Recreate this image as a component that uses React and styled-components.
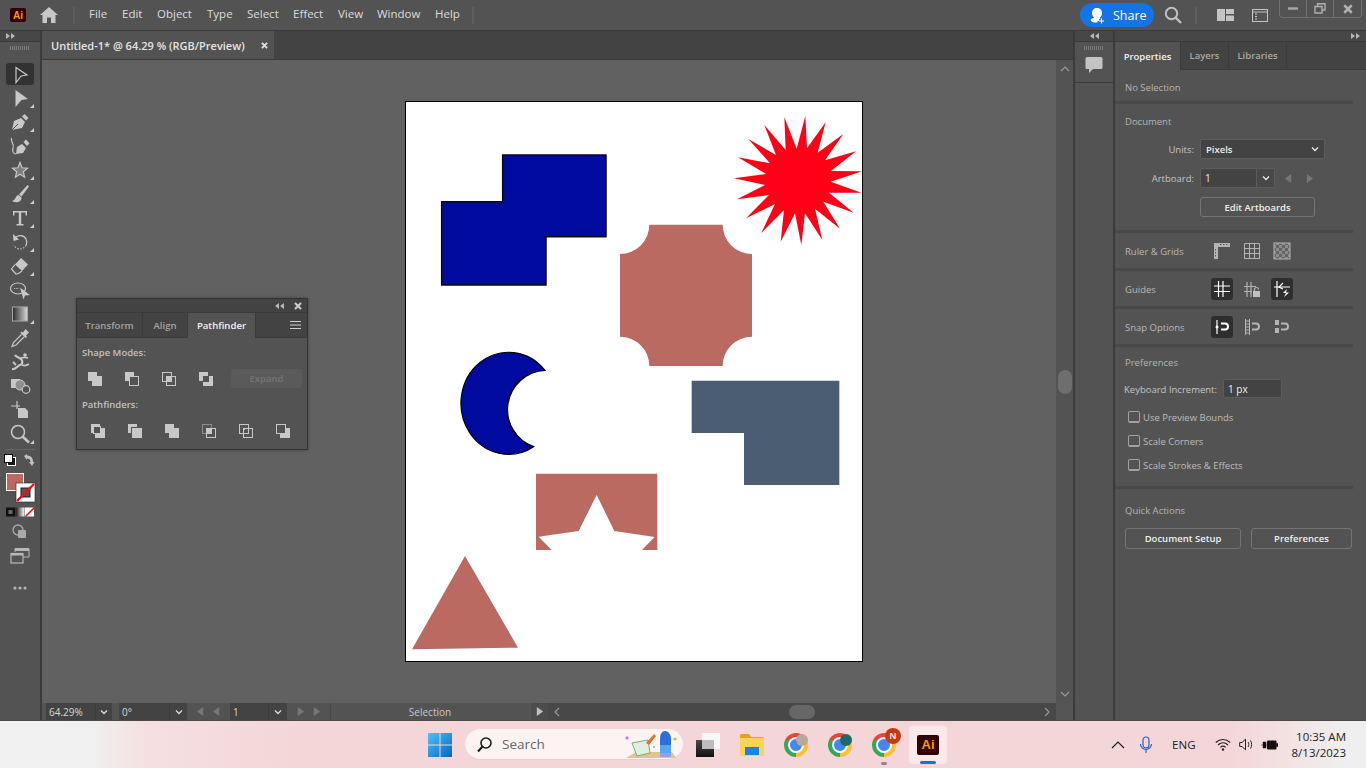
import styled, { createGlobalStyle } from 'styled-components';

const ICON = '#c8c8c8';
const PANEL = '#535353';
const LINE = '#3b3b3b';

const GlobalStyle = createGlobalStyle`
	html, body {
		margin: 0;
		padding: 0;
		background: #535353;
		font-family: "Open Sans", "Noto Sans", sans-serif;
	}
	* {
		box-sizing: border-box;
	}
	svg {
		display: block;
		flex: none;
	}
`;

const Shell = styled.div`
	width: 1366px;
	height: 768px;
	display: flex;
	flex-direction: column;
	overflow: hidden;
`;

/* top menu */
const MenuBar = styled.header`
	height: 31px;
	flex: none;
	display: flex;
	align-items: center;
	background: ${PANEL};
	border-bottom: 1px solid ${LINE};
	padding-left: 10px;
`;

const AiLogo = styled.div`
	width: ${(p) => p.$size}px;
	height: ${(p) => p.$size - 2}px;
	flex: none;
	display: flex;
	align-items: center;
	justify-content: center;
	background: #330000;
	color: #ff9a00;
	border-radius: 2px;
	font-family: "Liberation Sans", sans-serif;
	font-weight: 700;
	font-size: ${(p) => Math.round(p.$size * 0.6)}px;
`;

const MenuDivider = styled.div`
	width: 2px;
	height: 17px;
	background: #5e5e5e;
	margin: ${(p) => p.$margin};
	flex: none;
`;

const MenuItems = styled.nav`
	display: flex;
	gap: 15px;
	padding-bottom: 3px;
`;

const MenuItem = styled.span`
	font-size: 11.5px;
	color: #dcdcdc;
	width: ${(p) => p.$w}px;
	white-space: nowrap;
`;

const MenuRight = styled.div`
	margin-left: auto;
	display: flex;
	align-items: center;
	height: 100%;
	padding-right: 4px;
`;

const ShareButton = styled.div`
	width: 74px;
	height: 24px;
	border-radius: 12px;
	background: #1473e6;
	color: #fff;
	font-size: 12.5px;
	display: flex;
	align-items: center;
	gap: 8px;
	padding-left: 10px;
	margin-right: 10px;
`;

const WindowControls = styled.div`
	display: flex;
	align-self: flex-start;
	height: 18px;
	border: 1px solid #707070;
	border-top: none;
	border-radius: 0 0 4px 4px;
	margin-left: 11px;
`;

const WindowButton = styled.div`
	width: 27px;
	display: flex;
	align-items: center;
	justify-content: center;
	border-right: ${(p) => (p.$last ? 'none' : '1px solid #707070')};
`;

/* main area */
const Workspace = styled.div`
	flex: 1;
	display: flex;
	min-height: 0;
	background: ${LINE};
`;

const ToolColumn = styled.aside`
	width: 40px;
	flex: none;
	background: ${PANEL};
	display: flex;
	flex-direction: column;
	align-items: center;
	margin-right: 2px;
`;

const PanelStrip = styled.div`
	height: 11px;
	width: 100%;
	flex: none;
	background: #474747;
	display: flex;
	align-items: center;
	justify-content: ${(p) => p.$align || 'flex-start'};
	padding: 0 6px;
	border-bottom: 1px solid ${LINE};
`;

const Grip = styled.div`
	width: 20px;
	height: 4px;
	flex: none;
	margin: ${(p) => p.$margin};
	background: repeating-linear-gradient(90deg, #7c7c7c 0 1px, transparent 1px 2px);
`;

const ToolButton = styled.div`
	position: relative;
	width: 28px;
	height: ${(p) => (p.$active ? 22 : 24)}px;
	margin-bottom: ${(p) => (p.$active ? 1 : 0)}px;
	flex: none;
	display: flex;
	align-items: center;
	justify-content: center;
	border-radius: 3px;
	background: ${(p) => (p.$active ? '#323232' : 'transparent')};

	&::after {
		content: ${(p) => (p.$corner ? '""' : 'none')};
		position: absolute;
		right: 0;
		bottom: 2px;
		border-left: 4px solid transparent;
		border-bottom: 4px solid #d0d0d0;
	}
`;

const ToolDivider = styled.div`
	width: 30px;
	height: 1px;
	background: #666;
	margin: 3px 0 4px;
	flex: none;
`;

const ToolExtra = styled.div`
	margin-top: ${(p) => p.$top}px;
	flex: none;
`;

const DocColumn = styled.main`
	flex: 1;
	min-width: 0;
	display: flex;
	flex-direction: column;
`;

const TabBar = styled.div`
	height: 29px;
	flex: none;
	background: #434343;
	border-bottom: 1px solid ${LINE};
	display: flex;
`;

const DocTab = styled.div`
	width: 232px;
	background: ${PANEL};
	display: flex;
	align-items: center;
	justify-content: space-between;
	padding: 0 6px 0 9px;
	color: #e4e4e4;
	font-size: 11px;
	font-weight: 600;
	white-space: nowrap;
`;

const CanvasRow = styled.div`
	flex: 1;
	display: flex;
	min-height: 0;
`;

const Canvas = styled.div`
	flex: 1;
	position: relative;
	background: #616161;
	padding: 41px 0 0 363px;
	overflow: hidden;
`;

const Artboard = styled.svg`
	background: #fff;
`;

const VerticalScroll = styled.div`
	width: 17px;
	flex: none;
	background: ${PANEL};
	display: flex;
	flex-direction: column;
	align-items: center;
	padding: 6px 0;
`;

const ScrollThumb = styled.div`
	width: 14px;
	height: 24px;
	border-radius: 7px;
	background: #6e6e6e;
	margin: ${(p) => p.$margin};
	flex: none;
`;

const StatusBar = styled.footer`
	height: 17px;
	flex: none;
	display: flex;
	align-items: stretch;
	background: ${PANEL};
	padding-left: 4px;
	font-size: 10px;
	color: #d8d8d8;
`;

const StatusField = styled.div`
	width: ${(p) => p.$w}px;
	background: #434343;
	display: flex;
	align-items: center;
	padding: 1px 0 0 3px;
	flex: none;
	border-right: 1px solid ${LINE};
`;

const StatusChevron = styled.div`
	width: ${(p) => p.$w}px;
	background: #434343;
	display: flex;
	align-items: center;
	justify-content: center;
	flex: none;
	margin-right: ${(p) => p.$after || 0}px;
`;

const StatusNav = styled.div`
	width: 43px;
	display: flex;
	align-items: center;
	justify-content: center;
	gap: 7px;
	flex: none;
`;

const StatusMode = styled.div`
	width: 199px;
	flex: none;
	display: flex;
	align-items: center;
	justify-content: center;
	padding-top: 1px;
	border-left: 1px solid #484848;
	color: #c8c8c8;
`;

const StatusPlay = styled.div`
	width: 17px;
	margin-left: 2px;
	flex: none;
	background: #4c4c4c;
	display: flex;
	align-items: center;
	justify-content: center;
`;

const HorizontalScroll = styled.div`
	flex: 1;
	display: flex;
	align-items: center;
	background: #484848;
	padding: 0 6px;
`;

const HorizontalThumb = styled.div`
	width: 26px;
	height: 14px;
	border-radius: 7px;
	background: #666;
	margin-left: 229px;
`;

const ScrollCorner = styled.div`
	width: 17px;
	flex: none;
	background: #555;
`;

/* floating panel */
const FloatPanel = styled.section`
	position: absolute;
	left: 34px;
	top: 238px;
	width: 232px;
	height: 152px;
	background: ${PANEL};
	border: 1px solid #333;
	box-shadow: 0 0 3px rgba(0, 0, 0, 0.35);
	display: flex;
	flex-direction: column;
`;

const FloatHeader = styled.div`
	height: 13px;
	flex: none;
	background: #434343;
	display: flex;
	align-items: center;
	justify-content: flex-end;
	gap: 10px;
	padding-right: 5px;
`;

const FloatTabs = styled.div`
	height: 26px;
	flex: none;
	display: flex;
	background: #434343;
	border-top: 1px solid ${LINE};
	border-bottom: 1px solid ${LINE};
`;

const FloatTab = styled.div`
	width: ${(p) => p.$w}px;
	font-size: 9.6px;
	font-weight: 600;
	display: flex;
	align-items: center;
	justify-content: center;
	border-right: 1px solid ${LINE};
	margin-bottom: ${(p) => (p.$active ? -1 : 0)}px;
	background: ${(p) => (p.$active ? PANEL : 'transparent')};
	color: ${(p) => (p.$active ? '#f0f0f0' : '#a4a4a4')};
`;

const FloatMenu = styled.div`
	margin-left: auto;
	align-self: center;
	margin-right: 6px;
`;

const FloatTitle = styled.div`
	font-size: 9.5px;
	font-weight: 600;
	color: #c0c0c0;
	line-height: 14px;
	padding-left: 5px;
	margin-top: ${(p) => p.$top}px;
`;

const ModeRow = styled.div`
	display: flex;
	align-items: center;
	margin-top: ${(p) => p.$top}px;
	padding-left: ${(p) => p.$left}px;
	gap: ${(p) => p.$gap}px;
`;

const ExpandButton = styled.div`
	width: 71px;
	height: 19px;
	margin-left: -4px;
	background: #5a5a5a;
	border-radius: 2px;
	color: #747474;
	font-size: 9.5px;
	font-weight: 600;
	display: flex;
	align-items: center;
	justify-content: center;
`;

/* comments + properties */
const CommentColumn = styled.aside`
	width: 38px;
	flex: none;
	margin: 0 2px;
	background: ${PANEL};
	display: flex;
	flex-direction: column;
	align-items: center;
`;

const CommentCell = styled.div`
	width: 100%;
	height: 41px;
	flex: none;
	display: flex;
	flex-direction: column;
	align-items: center;
	border-bottom: 1px solid ${LINE};
`;

const PropertiesColumn = styled.aside`
	width: 251px;
	flex: none;
	background: ${PANEL};
	display: flex;
	flex-direction: column;
`;

const PropTabs = styled.div`
	height: 28px;
	flex: none;
	display: flex;
	background: #434343;
	border-bottom: 1px solid ${LINE};
`;

const PropTab = styled.div`
	width: ${(p) => p.$w}px;
	font-size: 9.5px;
	font-weight: 600;
	display: flex;
	align-items: center;
	justify-content: center;
	border-right: 1px solid ${LINE};
	margin-bottom: ${(p) => (p.$active ? -1 : 0)}px;
	background: ${(p) => (p.$active ? PANEL : 'transparent')};
	color: ${(p) => (p.$active ? '#f0f0f0' : '#a8a8a8')};
`;

const Section = styled.div`
	width: 238px;
	height: ${(p) => p.$h}px;
	flex: none;
	border-bottom: ${(p) => (p.$last ? 'none' : '3px solid #484848')};
	padding: ${(p) => p.$pad || '0 0 0 10px'};
`;

const SectionTitle = styled.div`
	font-size: 9.5px;
	font-weight: 500;
	line-height: 16px;
	color: #b4b4b4;
`;

const FieldGrid = styled.div`
	display: grid;
	grid-template-columns: 69px auto;
	column-gap: 6px;
	row-gap: 9px;
	align-items: center;
	justify-content: start;
	margin-top: 9px;
`;

const FieldLabel = styled.div`
	font-size: 9.5px;
	color: #c4c4c4;
	text-align: right;
	white-space: nowrap;
	padding-top: ${(p) => p.$nudge || 0}px;
`;

const SelectBox = styled.div`
	width: ${(p) => p.$w}px;
	height: 20px;
	background: #434343;
	border: 1px solid #5c5c5c;
	border-radius: 2px;
	display: flex;
	align-items: center;
	justify-content: space-between;
	padding: 0 5px;
	font-size: 9.5px;
	font-weight: 600;
	color: #ececec;
`;

const ArtboardRow = styled.div`
	display: flex;
	align-items: center;
`;

const InputBox = styled.div`
	width: ${(p) => p.$w}px;
	height: ${(p) => p.$h || 20}px;
	background: #434343;
	border: 1px solid #5c5c5c;
	border-radius: ${(p) => p.$radius || '2px'};
	display: flex;
	align-items: center;
	padding: 0 4px;
	font-size: 10px;
	color: #ececec;
	flex: none;
`;

const ChevronBox = styled.div`
	width: 18px;
	height: 20px;
	border: 1px solid #5c5c5c;
	border-left: none;
	border-radius: 0 2px 2px 0;
	background: #484848;
	display: flex;
	align-items: center;
	justify-content: center;
	margin-right: 9px;
	flex: none;
`;

const ArrowPair = styled.div`
	display: flex;
	gap: 12px;
	align-items: center;
`;

const OutlineButton = styled.div`
	width: ${(p) => p.$w}px;
	height: ${(p) => p.$h || 20}px;
	margin: ${(p) => p.$margin || 0};
	border: 1.5px solid #757575;
	border-radius: 3px;
	display: flex;
	align-items: center;
	justify-content: center;
	font-size: 9.5px;
	font-weight: 600;
	color: #efefef;
	flex: none;
	white-space: nowrap;
`;

const IconRow = styled.div`
	height: 100%;
	display: flex;
	align-items: center;
`;

const IconLabel = styled.div`
	width: 86px;
	flex: none;
	font-size: 9.5px;
	font-weight: 500;
	color: #b8b8b8;
	white-space: nowrap;
	padding-top: 2px;
`;

const IconGroup = styled.div`
	display: flex;
	gap: 8px;
`;

const IconTile = styled.div`
	width: 22px;
	height: 22px;
	border-radius: 3px;
	display: flex;
	align-items: center;
	justify-content: center;
	background: ${(p) => (p.$on ? '#2e2e2e' : 'transparent')};
`;

const IncrementRow = styled.div`
	display: flex;
	align-items: center;
	gap: 6px;
	margin: 8px 0 0 -1px;
`;

const CheckRow = styled.div`
	display: flex;
	align-items: center;
	gap: 3px;
	height: 24px;
	margin-left: 3px;
	font-size: 9.5px;
	color: #bcbcbc;
	white-space: nowrap;
`;

const CheckBox = styled.div`
	width: 12px;
	height: 12px;
	border: 1px solid #a0a0a0;
	border-bottom-width: 2px;
	border-radius: 2px;
`;

const CheckList = styled.div`
	margin-top: 7px;
`;

const ButtonRow = styled.div`
	display: flex;
	gap: 10px;
	margin: 9px 0 0 0;
`;

/* windows taskbar */
const Taskbar = styled.footer`
	height: 48px;
	flex: none;
	display: flex;
	align-items: center;
	padding-left: 428px;
	border-top: 1px solid #4a4a4a;
	background: linear-gradient(90deg, #f1f1f1 0, #f0f0f0 90px, #f5dfe0 150px, #f4d6d8 300px, #f4d6d8 1230px, #f3e2e3 1290px, #efefef 1345px);
`;

const SearchPill = styled.div`
	width: 218px;
	height: 31px;
	margin: 0 13px;
	border-radius: 16px;
	background: #fdf3f2;
	border-bottom: 1px solid #e4d2d2;
	display: flex;
	align-items: center;
	padding-left: 11px;
	gap: 9px;
	font-size: 13.5px;
	color: #666;
	position: relative;
`;

const SearchArt = styled.svg`
	position: absolute;
	right: 5px;
	top: 2px;
`;

const TaskIcon = styled.div`
	position: relative;
	width: 24px;
	height: 24px;
	margin-right: ${(p) => p.$after}px;
	flex: none;
`;

const ChromeBall = styled.div`
	width: 24px;
	height: 24px;
	border-radius: 50%;
	background: conic-gradient(#e8453c -60deg, #e8453c 60deg, #fbc02d 60deg, #fbc02d 180deg, #34a853 180deg, #34a853 300deg, #e8453c 300deg);
	display: flex;
	align-items: center;
	justify-content: center;

	&::after {
		content: '';
		width: 12px;
		height: 12px;
		border-radius: 50%;
		background: #4285f4;
		border: 2px solid #fff;
	}
`;

const ChromeBadge = styled.div`
	position: absolute;
	width: ${(p) => p.$size}px;
	height: ${(p) => p.$size}px;
	right: ${(p) => p.$right}px;
	top: ${(p) => p.$top}px;
	border-radius: 50%;
	background: ${(p) => p.$bg};
	color: #f4e4dc;
	font-size: 9px;
	font-weight: 700;
	display: flex;
	align-items: center;
	justify-content: center;
`;

const RunDot = styled.div`
	position: absolute;
	left: 9px;
	top: 29px;
	width: 6px;
	height: 3px;
	border-radius: 2px;
	background: #8a8a8a;
`;

const AiTask = styled.div`
	position: relative;
	width: 38px;
	height: 38px;
	border-radius: 4px;
	background: #f9e9ea;
	display: flex;
	align-items: center;
	justify-content: center;
	flex: none;

	&::after {
		content: '';
		position: absolute;
		left: 11px;
		bottom: 0;
		width: 16px;
		height: 3px;
		border-radius: 2px;
		background: #0b78d4;
	}
`;

const Tray = styled.div`
	margin-left: auto;
	display: flex;
	align-items: center;
	color: #222;
	padding-right: 20px;
`;

const TrayLang = styled.span`
	font-size: 11.5px;
	margin: 0 19px 0 19px;
`;

const Clock = styled.div`
	margin-left: 14px;
	text-align: right;
	font-size: 11.5px;
	line-height: 16px;
	white-space: nowrap;
`;

/* icons */
const Chevron = ({ color = '#dcdcdc', size = 8 }) => (
	<svg width={size} height={size} viewBox="0 0 8 8">
		<path d="M1 2.5 4 5.5 7 2.5" fill="none" stroke={color} strokeWidth="1.3" />
	</svg>
);

const DoubleArrow = ({ left }) => (
	<svg width="9" height="6" viewBox="0 0 9 6" style={left ? { transform: 'scaleX(-1)' } : undefined}>
		<path d="M0 0 4 3 0 6ZM5 0 9 3 5 6Z" fill="#b8b8b8" />
	</svg>
);

const Arrow = ({ dir = 'right', color = '#777', size = 10 }) => (
	<svg width={size} height={size} viewBox="0 0 10 10">
		<path d={dir === 'right' ? 'M2 0 9 5 2 10Z' : 'M8 0 1 5 8 10Z'} fill={color} />
	</svg>
);

const Cross = ({ size = 8, color = '#dcdcdc', width = 2 }) => (
	<svg width={size} height={size} viewBox="0 0 8 8">
		<path d="M1 1 7 7M7 1 1 7" stroke={color} strokeWidth={width} />
	</svg>
);

const Tool24 = ({ children }) => (
	<svg width="24" height="24" viewBox="0 0 24 24" fill={ICON} stroke="none">
		{children}
	</svg>
);

const o = { fill: 'none', stroke: ICON, strokeWidth: 1.2 };

const TOOLS = [
	{ id: 'select', active: true, d: <path d="M8 5.5 19 13 13.2 14 8 20.5Z" {...o} /> },
	{ id: 'direct', corner: true, d: <path d="M7.5 4 20 13 13.5 14 7.5 21Z" /> },
	{
		id: 'pen',
		corner: true,
		d: (
			<>
				<path d="M4 20 6 11 13 8 17 12 14 18Z" />
				<path d="M14 6.5 16.5 4 20.5 8 18 10.5Z" />
				<path d="M4 20 10 14" stroke={PANEL} strokeWidth="1" />
			</>
		),
	},
	{
		id: 'curvature',
		d: (
			<>
				<path d="M8 20 9 13 14 10 18 14 15 19Z" />
				<path d="M15.5 8 18 5.5 21.5 9.5 19 12Z" />
				<path d="M3.5 4C2 9 7 9 5 14 4 18 6 20 8 20" {...o} />
			</>
		),
	},
	{ id: 'star', corner: true, d: <path d="M12 4.5 14 9.8 19.5 10.2 15.3 13.8 16.6 19.2 12 16.2 7.4 19.2 8.7 13.8 4.5 10.2 10 9.8Z" fill="#7c7c7c" stroke={ICON} strokeWidth="1.2" /> },
	{
		id: 'brush',
		corner: true,
		d: (
			<>
				<path d="M19.5 3 21 4.5 13.5 14.5 11 12.5Z" />
				<path d="M10.5 13C7.5 13 8 18 4 19 8 21.5 14 20 13.5 15.5Z" />
			</>
		),
	},
	{
		id: 'type',
		corner: true,
		d: (
			<path d="M5 5H19V9.5H17.6V6.6H13.2V18H15.5V19.6H8.5V18H10.8V6.6H6.4V9.5H5Z" />
		),
	},
	{
		id: 'rotate',
		corner: true,
		d: (
			<>
				<path d="M7 8C10 4.5 16 5 18 9 19 11 19 13 18.3 15" {...o} />
				<path d="M18.3 15C15 20.5 8.5 20 5.8 15" {...o} strokeDasharray="1.4 1.6" />
				<path d="M5 4 5.5 11 11 9.5Z" />
			</>
		),
	},
	{
		id: 'eraser',
		corner: true,
		d: (
			<>
				<path d="M13 4 20 10.5 14 17 7 10.5Z" />
				<path d="M7 10.5 3.5 15 8 20 10.5 19.5 14 17" {...o} />
			</>
		),
	},
	{
		id: 'lasso',
		d: (
			<>
				<ellipse cx="10" cy="10.5" rx="7.5" ry="5.5" {...o} />
				<path d="M6 10.5H11" {...o} strokeDasharray="1.2 1.2" />
				<path d="M12 9.5 22 17 17 17.5 15.5 21.5Z" />
			</>
		),
	},
	{
		id: 'gradient',
		corner: true,
		d: (
			<>
				<defs>
					<linearGradient id="toolGrad">
						<stop offset="0" stopColor="#2a2a2a" />
						<stop offset="1" stopColor="#d8d8d8" />
					</linearGradient>
				</defs>
				<rect x="4.5" y="5" width="15" height="14" fill="url(#toolGrad)" stroke="#a8a8a8" />
			</>
		),
	},
	{
		id: 'dropper',
		d: (
			<>
				<path d="M17.5 3 21 6.5 18 9.5 19 11 17.5 12 12.5 7 13.5 5.5 15 6.5Z" />
				<path d="M13.5 8.5 5.5 16.5 4 20.5 8 19 16 11" {...o} />
			</>
		),
	},
	{
		id: 'puppet',
		d: (
			<>
				<path d="M4 19C8 20 9 16 12 15 15 14 15 11 13 9 11 7.5 8 7 7 5" fill="none" stroke={ICON} strokeWidth="2.2" />
				<path d="M12 9C15 7 17 7 20 8M14 15C16 16 18 16 21 14M8 15 5 12" fill="none" stroke={ICON} strokeWidth="1.8" />
				<circle cx="17" cy="5" r="1.8" />
			</>
		),
	},
	{
		id: 'builder',
		d: (
			<>
				<rect x="3" y="5" width="9" height="9" />
				<circle cx="12" cy="11" r="5" fill="#909090" stroke={ICON} strokeWidth="1" />
				<circle cx="18" cy="15.5" r="3.8" fill={PANEL} stroke={ICON} strokeWidth="1.2" />
			</>
		),
	},
	{
		id: 'artboard',
		d: (
			<>
				<path d="M9 3V11M3 8H12" {...o} />
				<path d="M10 10H17L20 13V20H10Z" />
			</>
		),
	},
	{
		id: 'zoom',
		corner: true,
		d: (
			<>
				<circle cx="10" cy="10" r="6.5" {...o} strokeWidth="1.5" />
				<path d="M14.8 14.8 21 20.5" fill="none" stroke={ICON} strokeWidth="2.6" />
			</>
		),
	},
];

const FillStroke = () => (
	<svg width="40" height="46" viewBox="0 0 40 46">
		<rect x="6.5" y="0.5" width="17" height="17" fill="#bb6a61" stroke="#fff" />
		<rect x="16" y="10" width="19" height="19" fill="#fff" stroke="#222" strokeWidth="0.6" />
		<rect x="21" y="15" width="9" height="9" fill="#555" stroke="#222" />
		<path d="M17 28 34 11" stroke="#f01010" strokeWidth="2.4" />
		<rect x="6" y="34.5" width="9" height="9" fill="#111" />
		<rect x="8.5" y="37" width="4" height="4" fill="#666" />
		<defs>
			<linearGradient id="miniGrad">
				<stop offset="0" stopColor="#111" />
				<stop offset="1" stopColor="#fff" />
			</linearGradient>
		</defs>
		<rect x="15.5" y="34.5" width="9" height="9" fill="url(#miniGrad)" />
		<rect x="25" y="34.5" width="9" height="9" fill="#fff" />
		<path d="M25.5 43.5 34 35" stroke="#f01010" strokeWidth="1.6" />
	</svg>
);

const PF = ({ children }) => (
	<svg width="16" height="16" viewBox="0 0 16 16" fill={ICON} stroke="none">
		{children}
	</svg>
);

const line = { fill: 'none', stroke: ICON, strokeWidth: 1 };

const SHAPE_MODES = [
	<path key="1" d="M1 1H10V5H15V15H5V10H1Z" />,
	<>
		<path d="M1 1H10V5H5V10H1Z" />
		<rect x="5.5" y="5.5" width="9" height="9" {...line} />
	</>,
	<>
		<rect x="1.5" y="1.5" width="9" height="9" {...line} />
		<rect x="5.5" y="5.5" width="9" height="9" {...line} />
		<rect x="5" y="5" width="6" height="6" />
	</>,
	<>
		<path d="M1 1H10V5H5V10H1Z" />
		<path d="M11 5H15V15H5V11H11Z" />
	</>,
];

const PATHFINDERS = [
	<>
		<path d="M1 1H10V3H3V10H1Z" />
		<rect x="3.5" y="3.5" width="7" height="7" {...line} />
		<path d="M5 11H11V5H15V15H5Z" />
	</>,
	<>
		<path d="M1 1H10V4H4V10H1Z" />
		<rect x="5" y="5" width="10" height="10" />
	</>,
	<path d="M1 1H10V5H15V15H5V10H1Z" />,
	<>
		<rect x="1.5" y="1.5" width="9" height="9" fill="none" stroke="#8e8e8e" />
		<rect x="5.5" y="5.5" width="9" height="9" {...line} />
		<rect x="5" y="5" width="6" height="6" />
	</>,
	<>
		<rect x="1.5" y="1.5" width="9" height="9" {...line} />
		<rect x="5.5" y="5.5" width="9" height="9" {...line} />
		<path d="M5 8 8 5" {...line} />
	</>,
	<>
		<rect x="1.5" y="1.5" width="9" height="9" {...line} />
		<path d="M11 5H15V15H5V11H11Z" />
	</>,
];

const Tile = ({ children }) => (
	<svg width="18" height="18" viewBox="0 0 18 18" fill={ICON} stroke="none">
		{children}
	</svg>
);

const white = { fill: 'none', stroke: '#fff', strokeWidth: 1.2 };
const gray = { fill: 'none', stroke: '#b4b4b4', strokeWidth: 1.2 };

const StarBurst =
	'1201,48 1206,145 1262,67 1238,158 1315,102 1260,181 1353,154 1278,213 1371,214 1277,245 1369,278 1272,278 1346,338 1255,305 1305,386 1230,326 1252,420 1200,340 1189,435 1170,340 1127,425 1137,330 1069,399 1110,312 1023,355 1092,285 996,298 1080,255 987,235 1083,222 999,172 1095,190 1030,117 1113,165 1078,75 1142,150 1138,52 1175,146';

const ArtboardShapes = () => (
	<Artboard width="458" height="561" viewBox="405 101 458 561">
		<rect x="405.5" y="101.5" width="457" height="560" fill="#fff" stroke="#000" />
		<g transform="translate(405 100) scale(0.33333)">
			<path d="M293 165H603V410H423V555H110V305H293Z" fill="#000a9f" stroke="#0a0a14" strokeWidth="4.5" />
			<path d="M733 374H953A88 88 0 0 0 1041 462V710A88 88 0 0 0 953 798H733A88 88 0 0 0 645 710V462A88 88 0 0 0 733 374Z" fill="#bb6a61" />
			<polygon points={StarBurst} fill="#ff0016" />
		</g>
		<g transform="translate(405 345) scale(0.33333)">
			<path d="M420 76A143 153 0 1 0 386 305A118 118 0 0 1 420 76Z" fill="#000a9f" stroke="#000" strokeWidth="3.5" />
			<path d="M860 107H1303V420H1017V264H860Z" fill="#4a5d72" />
			<path d="M393 386H757V615H711L749 576 628 558 575 450 521 558 401 575 440 615H393Z" fill="#bb6a61" />
			<path d="M180 633 339 908 21 913Z" fill="#bb6a61" />
		</g>
	</Artboard>
);

const App = () => (
	<Shell>
		<GlobalStyle />
		<MenuBar>
			<AiLogo $size={16}>Ai</AiLogo>
			<svg width="20" height="18" viewBox="0 0 20 18" style={{ marginLeft: 13 }}>
				<path d="M10 1 19 9H16.5V17H12V11.5H8V17H3.5V9H1Z" fill="#c8c8c8" />
			</svg>
			<MenuDivider $margin="0 14px 0 14px" />
			<MenuItems>
				{[['File', 18], ['Edit', 20], ['Object', 35], ['Type', 25], ['Select', 31], ['Effect', 30], ['View', 24], ['Window', 43], ['Help', 25]].map(([label, w]) => (
					<MenuItem key={label} $w={w}>{label}</MenuItem>
				))}
			</MenuItems>
			<MenuDivider $margin="0 0 0 12px" />
			<MenuRight>
				<ShareButton>
					<svg width="15" height="17" viewBox="0 0 15 17">
						<path d="M7 1C10 1 12 3 12 6 12 8 11 9.5 10 10.5V11.5L11 12H9V14H7.5V15.5H5C2 15.5 .5 14 .5 12.5 2 11.5 4 11 4 10.5 3 9.5 2 8 2 6 2 3 4 1 7 1Z" fill="#fff" />
						<path d="M11.5 11.5V16.5M9 14H14" stroke="#fff" strokeWidth="1.2" />
					</svg>
					Share
				</ShareButton>
				<svg width="18" height="18" viewBox="0 0 18 18">
					<circle cx="7.5" cy="7.5" r="5.7" fill="none" stroke="#c0c0c0" strokeWidth="2" />
					<path d="M11.5 11.5 17 17" stroke="#c0c0c0" strokeWidth="2.4" />
				</svg>
				<MenuDivider $margin="0 20px 0 13px" />
				<svg width="17" height="12" viewBox="0 0 17 12" style={{ marginRight: 18 }}>
					<path d="M0 0H8V12H0ZM9 0H17V5H9ZM9 6.5H17V12H9Z" fill="#c4c4c4" />
				</svg>
				<svg width="16" height="13" viewBox="0 0 16 13">
					<rect x=".5" y=".5" width="15" height="12" fill="none" stroke="#c4c4c4" />
					<path d="M0 3H16M3 5H5M3 7.5H5M3 10H5" stroke="#c4c4c4" />
				</svg>
				<WindowControls>
					<WindowButton>
						<svg width="10" height="3" viewBox="0 0 10 3"><rect width="10" height="2.4" y=".3" fill="#a8a8a8" /></svg>
					</WindowButton>
					<WindowButton>
						<svg width="12" height="11" viewBox="0 0 12 11">
							<path d="M3.5 3V.8H11V7H8M1 3.5H8V10H1Z" fill="none" stroke="#b0b0b0" strokeWidth="1.4" />
						</svg>
					</WindowButton>
					<WindowButton $last>
						<Cross size={10} color="#b0b0b0" />
					</WindowButton>
				</WindowControls>
			</MenuRight>
		</MenuBar>

		<Workspace>
			<ToolColumn>
				<PanelStrip><DoubleArrow /></PanelStrip>
				<Grip $margin="4px 0 13px" />
				{TOOLS.map((tool) => (
					<ToolButton key={tool.id} $active={tool.active} $corner={tool.corner}>
						<Tool24>{tool.d}</Tool24>
					</ToolButton>
				))}
				<ToolDivider />
				<svg width="32" height="14" viewBox="0 0 32 14">
					<rect x="3.5" y="3.5" width="8" height="8" fill="#111" stroke="#fff" />
					<rect x=".5" y=".5" width="8" height="8" fill="#fff" stroke="#111" />
					<path d="M20 2 23 0V1.5C27 1.5 29 4 29 8H30.5L28 12 25 8H26.5C26.5 5.5 25 4.5 23 4.5V6Z" fill="#c0c0c0" />
				</svg>
				<ToolExtra $top={5}><FillStroke /></ToolExtra>
				<ToolExtra $top={4}>
					<svg width="18" height="18" viewBox="0 0 18 18">
						<circle cx="7" cy="7" r="5" fill="none" stroke="#aaa" strokeWidth="1.3" />
						<rect x="7" y="7" width="8" height="8" rx="1" fill="#aaa" />
					</svg>
				</ToolExtra>
				<ToolExtra $top={7}>
					<svg width="20" height="16" viewBox="0 0 20 16">
						<path d="M5 4V.5H19V9H13" fill="none" stroke="#b8b8b8" strokeWidth="1" />
						<rect x="5" y="0" width="14" height="3" fill="#b8b8b8" />
						<rect x="1" y="5.5" width="12" height="9.5" fill="none" stroke="#b8b8b8" strokeWidth="1.2" />
						<rect x="1" y="5" width="12" height="2.5" fill="#b8b8b8" />
					</svg>
				</ToolExtra>
				<ToolExtra $top={22}>
					<svg width="14" height="4" viewBox="0 0 14 4" fill="#b4b4b4">
						<circle cx="2" cy="2" r="1.6" /><circle cx="7" cy="2" r="1.6" /><circle cx="12" cy="2" r="1.6" />
					</svg>
				</ToolExtra>
			</ToolColumn>

			<DocColumn>
				<TabBar>
					<DocTab>
						Untitled-1* @ 64.29 % (RGB/Preview)
						<Cross size={7} color="#e4e4e4" />
					</DocTab>
				</TabBar>
				<CanvasRow>
					<Canvas>
						<ArtboardShapes />
						<FloatPanel>
							<FloatHeader>
								<DoubleArrow left />
								<Cross size={8} color="#cfcfcf" />
							</FloatHeader>
							<FloatTabs>
								<FloatTab $w={66}>Transform</FloatTab>
								<FloatTab $w={45}>Align</FloatTab>
								<FloatTab $w={68} $active>Pathfinder</FloatTab>
								<FloatMenu>
									<svg width="11" height="8" viewBox="0 0 11 8">
										<path d="M0 .5H11M0 4H11M0 7.5H11" stroke="#cfcfcf" />
									</svg>
								</FloatMenu>
							</FloatTabs>
							<FloatTitle $top={8}>Shape Modes:</FloatTitle>
							<ModeRow $top={9} $left={10} $gap={21}>
								{SHAPE_MODES.map((icon, i) => <PF key={i}>{icon}</PF>)}
								<ExpandButton>Expand</ExpandButton>
							</ModeRow>
							<FloatTitle $top={10}>Pathfinders:</FloatTitle>
							<ModeRow $top={11} $left={13} $gap={21}>
								{PATHFINDERS.map((icon, i) => <PF key={i}>{icon}</PF>)}
							</ModeRow>
						</FloatPanel>
					</Canvas>
					<VerticalScroll>
						<svg width="10" height="6" viewBox="0 0 10 6"><path d="M1 5 5 1 9 5" fill="none" stroke="#9a9a9a" strokeWidth="1.2" /></svg>
						<ScrollThumb $margin="298px 0 auto" />
						<svg width="10" height="6" viewBox="0 0 10 6"><path d="M1 1 5 5 9 1" fill="none" stroke="#9a9a9a" strokeWidth="1.2" /></svg>
					</VerticalScroll>
				</CanvasRow>
				<StatusBar>
					<StatusField $w={50}>64.29%</StatusField>
					<StatusChevron $w={16} $after={7}><Chevron /></StatusChevron>
					<StatusField $w={51}>0°</StatusField>
					<StatusChevron $w={17}><Chevron /></StatusChevron>
					<StatusNav>
						<Arrow dir="left" size={9} />
						<Arrow dir="left" size={9} />
					</StatusNav>
					<StatusField $w={39}>1</StatusField>
					<StatusChevron $w={18}><Chevron /></StatusChevron>
					<StatusNav>
						<Arrow size={9} />
						<Arrow size={9} />
					</StatusNav>
					<StatusMode>Selection</StatusMode>
					<StatusPlay><Arrow color="#c0c0c0" size={9} /></StatusPlay>
					<HorizontalScroll>
						<svg width="6" height="10" viewBox="0 0 6 10"><path d="M5 1 1 5 5 9" fill="none" stroke="#9a9a9a" strokeWidth="1.2" /></svg>
						<HorizontalThumb />
						<svg width="6" height="10" viewBox="0 0 6 10" style={{ marginLeft: 'auto' }}><path d="M1 1 5 5 1 9" fill="none" stroke="#9a9a9a" strokeWidth="1.2" /></svg>
					</HorizontalScroll>
					<ScrollCorner />
				</StatusBar>
			</DocColumn>

			<CommentColumn>
				<PanelStrip $align="center"><DoubleArrow left /></PanelStrip>
				<CommentCell>
					<Grip $margin="4px 0 6px" />
					<svg width="18" height="18" viewBox="0 0 18 18">
						<path d="M2 1H16A1.5 1.5 0 0 1 17.5 2.5V11.5A1.5 1.5 0 0 1 16 13H8L4 17V13H2A1.5 1.5 0 0 1 .5 11.5V2.5A1.5 1.5 0 0 1 2 1Z" fill="#c4c4c4" />
					</svg>
				</CommentCell>
			</CommentColumn>

			<PropertiesColumn>
				<PanelStrip $align="flex-end"><DoubleArrow /></PanelStrip>
				<PropTabs>
					<PropTab $w={66} $active>Properties</PropTab>
					<PropTab $w={48}>Layers</PropTab>
					<PropTab $w={58}>Libraries</PropTab>
				</PropTabs>

				<Section $h={34} $pad="10px 0 0 10px">
					<SectionTitle>No Selection</SectionTitle>
				</Section>

				<Section $h={129} $pad="10px 0 0 10px">
					<SectionTitle>Document</SectionTitle>
					<FieldGrid>
						<FieldLabel>Units:</FieldLabel>
						<SelectBox $w={125}>Pixels <Chevron color="#e8e8e8" /></SelectBox>
						<FieldLabel>Artboard:</FieldLabel>
						<ArtboardRow>
							<InputBox $w={57} $radius="2px 0 0 2px">1</InputBox>
							<ChevronBox><Chevron color="#e8e8e8" /></ChevronBox>
							<ArrowPair>
								<Arrow dir="left" size={9} />
								<Arrow size={9} />
							</ArrowPair>
						</ArtboardRow>
						<span />
						<OutlineButton $w={115}>Edit Artboards</OutlineButton>
					</FieldGrid>
				</Section>

				<Section $h={38}>
					<IconRow>
						<IconLabel>Ruler &amp; Grids</IconLabel>
						<IconGroup>
							<IconTile>
								<Tile>
									<path d="M1 1H17V5H5V17H1Z" fill="#b4b4b4" />
									<path d="M7 2.5H15.5M2.5 7V15.5" stroke="#535353" strokeDasharray="1.4 1.6" />
								</Tile>
							</IconTile>
							<IconTile>
								<Tile>
									<path d="M1.5 1.5H16.5V16.5H1.5ZM6.5 1.5V16.5M11.5 1.5V16.5M1.5 6.5H16.5M1.5 11.5H16.5" {...gray} strokeWidth="1" />
								</Tile>
							</IconTile>
							<IconTile>
								<Tile>
									<defs>
										<pattern id="checker" width="6" height="6" patternUnits="userSpaceOnUse">
											<rect width="6" height="6" fill="#8c8c8c" />
											<rect width="3" height="3" fill="#646464" />
											<rect x="3" y="3" width="3" height="3" fill="#646464" />
										</pattern>
									</defs>
									<rect x="1" y="1" width="16" height="16" fill="url(#checker)" stroke="#b4b4b4" />
								</Tile>
							</IconTile>
						</IconGroup>
					</IconRow>
				</Section>

				<Section $h={38}>
					<IconRow>
						<IconLabel>Guides</IconLabel>
						<IconGroup>
							<IconTile $on>
								<Tile><path d="M5.5 1V17M10 1V17M1 6H17M1 11.5H17" {...white} /></Tile>
							</IconTile>
							<IconTile>
								<Tile>
									<path d="M4 2V17M8 2V17M1 6.5H13M1 11.5H9" {...gray} />
									<rect x="10" y="11" width="7" height="6" fill="#c0c0c0" />
									<path d="M11.5 11V9.5A2 2 0 0 1 15.5 9.5" {...gray} />
								</Tile>
							</IconTile>
							<IconTile $on>
								<Tile>
									<path d="M4 1V17M1 7H17" {...white} />
									<path d="M10 3 6 7 10 9" {...white} />
									<path d="M14 9 10 13H13L11 17 16 12.5H13Z" fill="#fff" />
								</Tile>
							</IconTile>
						</IconGroup>
					</IconRow>
				</Section>

				<Section $h={38}>
					<IconRow>
						<IconLabel>Snap Options</IconLabel>
						<IconGroup>
							<IconTile $on>
								<Tile>
									<path d="M4 2V16" {...white} />
									<circle cx="4" cy="9" r="1.5" fill="#fff" />
									<path d="M8 5.5H12A3 3 0 0 1 12 11.5H8" fill="none" stroke="#fff" strokeWidth="2" />
								</Tile>
							</IconTile>
							<IconTile>
								<Tile>
									<path d="M2.5 1V17M6.5 1V17M2.5 3H6.5M2.5 6H6.5M2.5 9H6.5M2.5 12H6.5M2.5 15H6.5" {...gray} strokeWidth="1" />
									<path d="M9 5.5H13A3 3 0 0 1 13 11.5H9" fill="none" stroke="#b4b4b4" strokeWidth="2" />
								</Tile>
							</IconTile>
							<IconTile>
								<Tile>
									<path d="M2 2H6V7H2ZM2 10H6V15H2Z" fill="#b4b4b4" />
									<path d="M8 5.5H12A3 3 0 0 1 12 11.5H8" fill="none" stroke="#b4b4b4" strokeWidth="2" />
								</Tile>
							</IconTile>
						</IconGroup>
					</IconRow>
				</Section>

				<Section $h={142} $pad="8px 0 0 10px">
					<SectionTitle>Preferences</SectionTitle>
					<IncrementRow>
						<FieldLabel $nudge={1}>Keyboard Increment:</FieldLabel>
						<InputBox $w={59} $h={19}>1 px</InputBox>
					</IncrementRow>
					<CheckList>
						<CheckRow><CheckBox />Use Preview Bounds</CheckRow>
						<CheckRow><CheckBox />Scale Corners</CheckRow>
						<CheckRow><CheckBox />Scale Strokes &amp; Effects</CheckRow>
					</CheckList>
				</Section>

				<Section $h={70} $last $pad="14px 0 0 10px">
					<SectionTitle>Quick Actions</SectionTitle>
					<ButtonRow>
						<OutlineButton $w={116} $h={21}>Document Setup</OutlineButton>
						<OutlineButton $w={101} $h={21}>Preferences</OutlineButton>
					</ButtonRow>
				</Section>
			</PropertiesColumn>
		</Workspace>

		<Taskbar>
			<svg width="24" height="24" viewBox="0 0 24 24">
				<defs>
					<linearGradient id="winGrad" x1="0" y1="0" x2="1" y2="1">
						<stop offset="0" stopColor="#4cc2ff" />
						<stop offset="1" stopColor="#0067c0" />
					</linearGradient>
				</defs>
				<path d="M0 0H11.5V11.5H0ZM12.5 0H24V11.5H12.5ZM0 12.5H11.5V24H0ZM12.5 12.5H24V24H12.5Z" fill="url(#winGrad)" />
			</svg>
			<SearchPill>
				<svg width="17" height="17" viewBox="0 0 17 17">
					<circle cx="10" cy="7" r="5" fill="none" stroke="#1c1c1c" strokeWidth="1.6" />
					<path d="M6.5 10.5 2 15.5" stroke="#1c1c1c" strokeWidth="2" />
				</svg>
				Search
				<SearchArt width="54" height="28" viewBox="0 0 54 28">
					<path d="M2 27 12 21H48L52 27Z" fill="#e5c28e" />
					<path d="M8 12 24 9 26 22 13 25Z" fill="#dff0df" stroke="#7da884" />
					<path d="M22 12 30 3 32 5 25 14Z" fill="#e8702a" />
					<path d="M36 8C36 3 38 0 41 0 44 0 47 3 47 8V24H36Z" fill="#2a6fdb" />
					<path d="M36 14H47V24H36Z" fill="#5aa6f0" />
					<path d="M36 22H47V26H36Z" fill="#a09be8" />
					<path d="M3 5 5 7 3 9 1 7Z" fill="#d070f0" />
					<circle cx="30" cy="16" r="1" fill="#4bc8d8" />
					<circle cx="51" cy="8" r="1.6" fill="#f2a72c" />
				</SearchArt>
			</SearchPill>
			<svg width="24" height="24" viewBox="0 0 24 24" style={{ marginRight: 20 }}>
				<defs>
					<linearGradient id="taskDark" x1="0" y1="0" x2="0" y2="1">
						<stop offset="0" stopColor="#4a4a4a" />
						<stop offset="1" stopColor="#111" />
					</linearGradient>
				</defs>
				<rect x="0" y="7" width="18" height="17" fill="url(#taskDark)" />
				<rect x="6" y="0" width="18" height="16" fill="#f7f7f7" />
				<rect x="6" y="7" width="12" height="9" fill="#bdbdbd" />
			</svg>
			<svg width="24" height="22" viewBox="0 0 24 22" style={{ marginRight: 20 }}>
				<path d="M0 1.5A1.5 1.5 0 0 1 1.5 0H9L11 3H22.5A1.5 1.5 0 0 1 24 4.5V8H0Z" fill="#e0a416" />
				<path d="M0 4H24V22H0Z" fill="#fbd35a" />
				<rect x="5" y="13" width="14" height="8" fill="#1a86d9" />
			</svg>
			<TaskIcon $after={20}>
				<ChromeBall />
				<ChromeBadge $size={12} $right={0} $top={1} $bg="#b8aa98" />
			</TaskIcon>
			<TaskIcon $after={20}>
				<ChromeBall />
				<ChromeBadge $size={12} $right={0} $top={1} $bg="#1f6a68" />
			</TaskIcon>
			<TaskIcon $after={13}>
				<ChromeBall />
				<ChromeBadge $size={16} $right={-5} $top={-5} $bg="#c8390e">N</ChromeBadge>
				<RunDot />
			</TaskIcon>
			<AiTask><AiLogo $size={22}>Ai</AiLogo></AiTask>
			<Tray>
				<svg width="14" height="8" viewBox="0 0 14 8" style={{ marginRight: 14 }}>
					<path d="M1 7 7 1 13 7" fill="none" stroke="#222" strokeWidth="1.2" />
				</svg>
				<svg width="14" height="18" viewBox="0 0 14 18">
					<rect x="4" y="1" width="6" height="11" rx="3" fill="none" stroke="#2b62c0" strokeWidth="1.2" />
					<path d="M1.5 8A5.5 5.5 0 0 0 12.5 8M7 13.5V17" fill="none" stroke="#2b62c0" strokeWidth="1.2" />
				</svg>
				<TrayLang>ENG</TrayLang>
				<svg width="16" height="13" viewBox="0 0 16 13" style={{ marginRight: 8 }}>
					<path d="M.8 4.5C5 .5 11 .5 15.2 4.5M3 7C6 4.2 10 4.2 13 7M5.3 9.3C6.8 8 9.2 8 10.7 9.3" fill="none" stroke="#222" strokeWidth="1.1" />
					<circle cx="8" cy="11.5" r="1.2" fill="#222" />
				</svg>
				<svg width="16" height="13" viewBox="0 0 16 13" style={{ marginRight: 6 }}>
					<path d="M.7 4.5H3L6.5 1.2V11.8L3 8.5H.7Z" fill="none" stroke="#222" />
					<path d="M9 4C10 5.5 10 7.5 9 9M11.5 2.5C13 5 13 8 11.5 10.5" fill="none" stroke="#222" />
				</svg>
				<svg width="17" height="12" viewBox="0 0 17 12">
					<rect x="6" y="1.5" width="9.5" height="9" rx="1" fill="#111" />
					<path d="M15.5 4.5H17V7.5H15.5ZM0 6H6M2 3V9H5V3Z" fill="#111" stroke="#111" strokeWidth=".5" />
				</svg>
				<Clock>
					10:35 AM
					<br />
					8/13/2023
				</Clock>
			</Tray>
		</Taskbar>
	</Shell>
);

export default App;
